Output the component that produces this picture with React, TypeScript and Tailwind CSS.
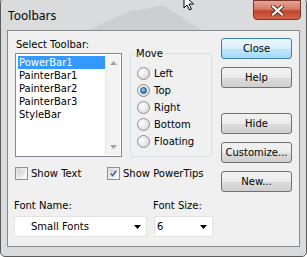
import React from "react";

const FONT = { fontFamily: "Tahoma, 'DejaVu Sans', sans-serif" };

const ITEMS = ["PowerBar1", "PainterBar1", "PainterBar2", "PainterBar3", "StyleBar"];
const MOVES = ["Left", "Top", "Right", "Bottom", "Floating"];

function Btn({ label, primary, className }: { label: string; primary?: boolean; className?: string }) {
  return (
    <div
      className={`relative h-[21px] w-[71px] rounded-[3px] border flex items-center justify-center text-[10px] text-black ${
        primary
          ? "border-[#3c7fb1] bg-[linear-gradient(#eaf6fd_0%,#d9f0fc_50%,#bee6fd_51%,#a7d9f5_100%)]"
          : "border-[#707070] bg-[linear-gradient(#f2f2f2_0%,#ebebeb_50%,#dddddd_51%,#cfcfcf_100%)]"
      } ${className ?? ""}`}
    >
      {label}
    </div>
  );
}

function Radio({ on }: { on?: boolean }) {
  return (
    <span className="w-[13px] h-[13px] rounded-full border border-[#8e8f8f] bg-[radial-gradient(circle_at_35%_35%,#ffffff,#d0d0d0)] flex items-center justify-center shrink-0">
      {on && <span className="w-[7px] h-[7px] rounded-full bg-[radial-gradient(circle_at_40%_35%,#8fd1f5,#0c5aa0)] border border-[#1b4f7a]" />}
    </span>
  );
}

function Check({ on }: { on?: boolean }) {
  return (
    <span className="w-[13px] h-[13px] border border-[#8e8f8f] bg-[linear-gradient(135deg,#dcdcdc,#ffffff)] p-[2px] shrink-0">
      <span className="block w-full h-full bg-[linear-gradient(135deg,#cbcfd5,#f6f6f6)]">
        {on && (
          <svg viewBox="0 0 7 7" className="w-full h-full">
            <path d="M0.8 3.6 L2.7 5.6 L6.3 0.8" fill="none" stroke="#4a5f97" strokeWidth="1.5" />
          </svg>
        )}
      </span>
    </span>
  );
}

function Caret() {
  return (
    <svg width="7" height="4" viewBox="0 0 7 4">
      <path d="M0 0 H7 L3.5 4 Z" fill="#000" />
    </svg>
  );
}

export default function App() {
  return (
    <div className="relative w-[307px] h-[257px] overflow-hidden bg-white" style={FONT}>
      {/* window frame */}
      <div className="absolute left-0 top-[-4px] w-[307px] h-[261px] rounded-t-[7px] rounded-b-[5px] border border-[#5a5a5a] bg-[#d9dbdd] flex flex-col overflow-hidden">
        {/* title bar */}
        <div className="relative h-[33px] shrink-0 flex items-start">
          <svg className="absolute left-0 top-0" width="307" height="33" viewBox="0 0 307 33">
            <polygon points="88,33 128,14 146,12 162,8 200,33" fill="#c9cbcd" opacity="0.8" />
          </svg>
          <span
            className="relative mt-[11px] ml-[7px] text-[12px] leading-[16px] text-black"
            style={{ fontFamily: "'Noto Sans', sans-serif" }}
          >
            Toolbars
          </span>
          <div className="absolute right-[5px] top-[3px] w-[48px] h-[20px] rounded-b-[4px] border border-[#7a3226] bg-[linear-gradient(#e8a493_0%,#d47d68_45%,#c5442a_55%,#d2654a_100%)] flex items-center justify-center">
            <svg width="13" height="11" viewBox="0 0 13 11">
              <path d="M2 1.5 L11 9.5 M11 1.5 L2 9.5" stroke="#5b2a20" strokeWidth="4" strokeLinecap="square" />
              <path d="M2 1.5 L11 9.5 M11 1.5 L2 9.5" stroke="#ffffff" strokeWidth="2.2" strokeLinecap="square" />
            </svg>
          </div>
        </div>

        {/* client area */}
        <div className="mx-[6px] h-[217px] border border-[#8a8a8a] bg-[#f0f0f0] text-[10px] text-black relative">
          <div className="flex pl-[7px] pt-[7px]">
            {/* list column */}
            <div className="flex flex-col w-[107px]">
              <span className="leading-[13px] ml-[1px]">Select Toolbar:</span>
              <div className="mt-[2px] h-[104px] border border-[#828790] bg-white flex p-[2px] pr-[1px]">
                <div className="flex-1 flex flex-col">
                  {ITEMS.map((it, i) => (
                    <div
                      key={it}
                      className={`h-[13px] leading-[13px] pl-[1px] ${i === 0 ? "bg-[#3399ff] text-white" : "text-[#000]"}`}
                    >
                      {it}
                    </div>
                  ))}
                </div>
                <div className="w-[15px] -my-[1px] bg-[#f3f3f3] border-l border-[#e6e6e6] flex flex-col items-center justify-between py-[6px]">
                  <svg width="7" height="4" viewBox="0 0 7 4">
                    <path d="M0 4 H7 L3.5 0 Z" fill="#a3a3a3" />
                  </svg>
                  <svg width="7" height="4" viewBox="0 0 7 4">
                    <path d="M0 0 H7 L3.5 4 Z" fill="#a3a3a3" />
                  </svg>
                </div>
              </div>
            </div>

            {/* move group */}
            <div className="relative ml-[8px] mt-[15px] w-[82px] h-[104px] rounded-[3px] border border-[#d5dfe5]">
              <span className="absolute left-[4px] top-[-7px] px-[1px] bg-[#f0f0f0] leading-[13px]">Move</span>
              <div className="flex flex-col gap-[4px] pl-[6px] pt-[13px]">
                {MOVES.map((m, i) => (
                  <div key={m} className="flex items-center gap-[4px] h-[13px]">
                    <Radio on={i === 1} />
                    <span className="leading-[13px]">{m}</span>
                  </div>
                ))}
              </div>
            </div>

            {/* buttons */}
            <div className="ml-[9px] flex flex-col">
              <Btn label="Close" primary />
              <Btn label="Help" className="mt-[8px]" />
              <Btn label="Hide" className="mt-[25px]" />
              <Btn label="Customize..." className="mt-[8px]" />
              <Btn label="New..." className="mt-[8px]" />
            </div>
          </div>

          {/* checkboxes */}
          <div className="absolute left-[7px] top-[136px] flex items-center">
            <Check />
            <span className="ml-[3px] leading-[13px]">Show Text</span>
          </div>
          <div className="absolute left-[99px] top-[136px] flex items-center">
            <Check on />
            <span className="ml-[3px] leading-[13px]">Show PowerTips</span>
          </div>

          {/* fonts */}
          <div className="absolute left-[6px] top-[168px] flex gap-[6px]">
            <div className="flex flex-col w-[133px]">
              <span className="leading-[13px]">Font Name:</span>
              <div className="mt-[4px] h-[21px] bg-white border border-[#e2e2e2] flex items-center pl-[16px] pr-[5px]">
                <span className="flex-1">Small Fonts</span>
                <Caret />
              </div>
            </div>
            <div className="flex flex-col w-[59px] ml-[1px]">
              <span className="leading-[13px] -ml-[1px]">Font Size:</span>
              <div className="mt-[4px] h-[21px] bg-white border border-[#e2e2e2] flex items-center pl-[2px] pr-[5px]">
                <span className="flex-1">6</span>
                <Caret />
              </div>
            </div>
          </div>
        </div>
      </div>

      {/* mouse pointer at top edge */}
      <svg className="absolute left-[183px] top-[-6px]" width="14" height="18" viewBox="0 0 14 18">
        <path d="M1 1 L1 14 L4 11 L6.5 16 L8.5 15 L6 10 L10.5 10 Z" fill="#fff" stroke="#000" strokeWidth="1" />
      </svg>
    </div>
  );
}
